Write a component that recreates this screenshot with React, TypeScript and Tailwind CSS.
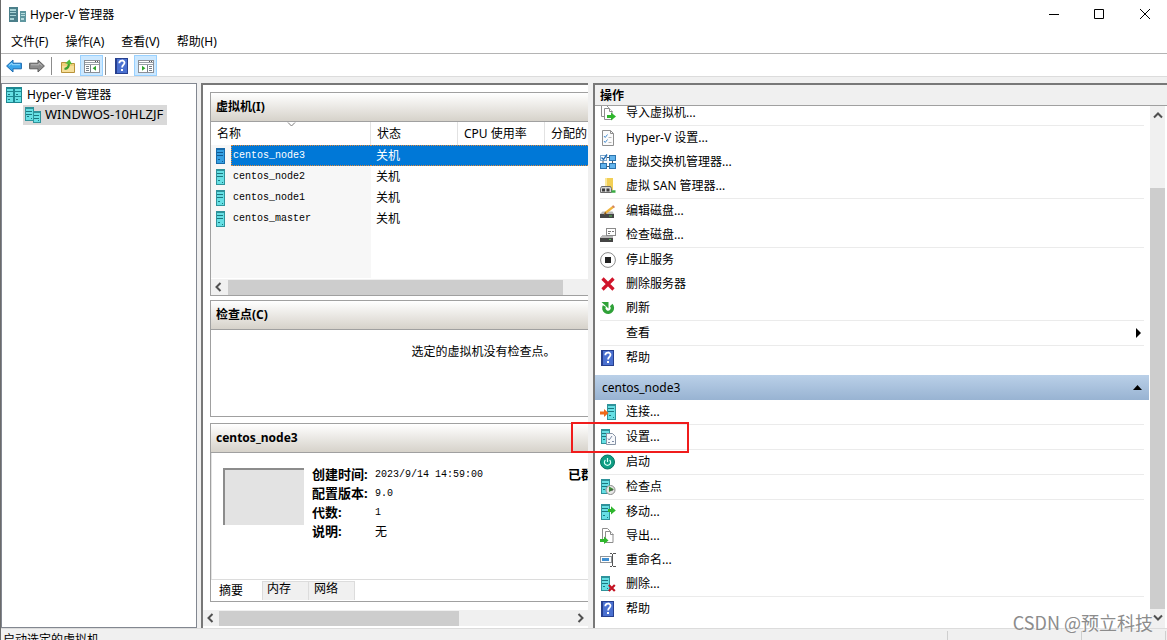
import type { ReactNode } from "react";
import clsx from "clsx";

type Action = {
  label: string;
  icon?: ReactNode;
  divider?: boolean;
  submenu?: boolean;
  highlighted?: boolean;
};

function Icon({ children, size = 16 }: { children: ReactNode; size?: number }) {
  return (
    <svg width={size} height={size} viewBox="0 0 16 16" fill="none" aria-hidden="true" className="shrink-0">
      {children}
    </svg>
  );
}

function Tower({ x = 0, y = 0, w = 10, h = 16 }: { x?: number; y?: number; w?: number; h?: number }) {
  return (
    <g shapeRendering="crispEdges">
      <rect x={x} y={y} width={w} height={h} fill="#2f939b" />
      <rect x={x + 1} y={y + 2} width={w - 2} height={h - 3} fill="#66dfe4" />
      <path
        d={`M${x + 1} ${y + 4.5}h${w - 3}M${x + 1} ${y + 7.5}h${w - 3}M${x + 2} ${y + h - 4.5}h2M${x + w - 3} ${y + h - 2.5}h1`}
        stroke="#1c7880"
      />
    </g>
  );
}

const HelpIcon = () => (
  <Icon>
    <rect x="1" width="13" height="16" fill="#27408f" />
    <rect x="3" y="1" width="10" height="14" fill="#4a70d0" />
    <path d="M5.300 5.200c0-3.600 5.200-3.400 5.200-.4 0 2-2.400 2.200-2.400 4.600" stroke="#fff" strokeWidth="1.800" />
    <rect x="7" y="11" width="2" height="2" fill="#fff" />
  </Icon>
);

const AppIcon = () => (
  <Icon size={18}>
    <g shapeRendering="crispEdges">
      <rect x="0" y="1" width="8" height="13" fill="#4b7f8a" />
      <path d="M1 3.500h5M1 5.500h5M1 8.500h5M1 11.500h3" stroke="#a9d3d6" />
      <rect x="10" y="4" width="5" height="10" fill="#5f97a0" />
      <path d="M11 6.500h3M11 8.500h3M11 11.500h2" stroke="#b6dcde" />
    </g>
  </Icon>
);

const RootIcon = () => (
  <Icon>
    <g shapeRendering="crispEdges">
      <rect width="16" height="16" fill="#1d8791" />
      <path d="M1 2h6v2H1zM9 2h6v2H9zM1 5h6v4H1zM9 5h6v4H9zM1 10h6v5H1zM9 10h6v5H9z" fill="#66dfe4" />
      <path d="M2 7.500h2M10 7.500h2M2 12.500h2M10 12.500h2" stroke="#1c7880" />
    </g>
  </Icon>
);

const HostIcon = () => (
  <Icon>
    <Tower x={0} y={0} w={9} h={14} />
    <Tower x={8} y={4} w={8} h={12} />
  </Icon>
);

const BackIcon = () => (
  <Icon>
    <path d="M.6 8 7 2v3.200h8.400v5.600H7V14z" fill="#3aa5ea" stroke="#1969b0" strokeLinejoin="round" />
    <path d="M3 7.500 6 5v1.700h8" stroke="#9bdcff" />
  </Icon>
);

const ForwardIcon = () => (
  <Icon>
    <path d="M15.400 8 9 2v3.200H.6v5.600H9V14z" fill="#8c8c8c" stroke="#5c5c5c" strokeLinejoin="round" />
    <path d="M2 6.800h8V5l2.800 2.500" stroke="#b9b9b9" />
  </Icon>
);

const FolderUpIcon = () => (
  <Icon>
    <path d="M1.500 4.500h5l1 1h7v9h-13z" fill="#efd07a" stroke="#b8923a" />
    <path d="M2 8h12v6H2z" fill="#f6df9a" />
    <path d="M4.500 11C8 10.500 9 8 8.800 5.500" stroke="#3da12f" strokeWidth="2.200" />
    <path d="M5.200 5.600 9.400 1.400l2.600 4.800z" fill="#4fbd3c" />
  </Icon>
);

function PaneIcon({ flip = false }: { flip?: boolean }) {
  return (
    <Icon>
      <g shapeRendering="crispEdges">
        <rect x=".5" y="2.500" width="15" height="12" fill="#fff" stroke="#8b8f96" />
        <path d="M1 4.500h14M1 6.500h14" stroke="#9aa0a8" />
        <path d="M11 3.500h1M13 3.500h1" stroke="#555" />
        {flip ? (
          <path d="M9.500 7v7M11 8.500h3M11 10.500h3M11 12.500h3" stroke="#777f88" />
        ) : (
          <path d="M6.500 7v7M2 8.500h3M2 10.500h3M2 12.500h3" stroke="#777f88" />
        )}
      </g>
      {flip ? <path d="M4 7.800v5l3.400-2.500z" fill="#2fa32c" /> : <path d="M12 7.800v5l-3.400-2.500z" fill="#2fa32c" />}
    </Icon>
  );
}

const Pages = ({ x = 0 }: { x?: number }) => (
  <g fill="#fff" stroke="#8d8d8d">
    <path d={`M${x + 1.5} .5h5l2 2v9h-7z`} />
    <path d={`M${x + 4.5} 3.500h5l2.500 2.500v8.500h-7.500z`} />
    <path d={`M${x + 9.5} 3.500v3h3`} />
  </g>
);

const ImportIcon = () => (
  <Icon>
    <Pages />
    <path d="M7 10h4V7.500l5 4-5 4V13H7z" fill="#2fb62d" />
  </Icon>
);

const ExportIcon = () => (
  <Icon>
    <Pages x={1} />
    <path d="M0 11h4V8.500l4.500 4-4.500 3.500v-2H0z" fill="#2fb62d" />
  </Icon>
);

const ChecklistIcon = () => (
  <Icon>
    <path d="M2.500 .5h8l3 3v12h-11z" fill="#fbfbfb" stroke="#8f8f8f" />
    <path d="M10.500 .5v3h3" stroke="#8f8f8f" />
    <path d="m4 6 1.200 1.500L7.500 4.500M4 11l1.200 1.500 2.300-3" stroke="#4a8fd0" />
    <path d="M8.500 7.500h3M8.500 12.500h3" stroke="#b5b5b5" />
  </Icon>
);

const SwitchIcon = () => (
  <Icon>
    <path d="M3 6v5M12.500 6v5M6 3.500h3M6 12.500h3" stroke="#4b5660" />
    <rect x="9.500" y="1.500" width="6" height="5" fill="#63b4ec" stroke="#2c74ad" />
    <rect x=".5" y="9.500" width="6" height="5" fill="#63b4ec" stroke="#2c74ad" />
    <rect x="9.500" y="9.500" width="6" height="5" fill="#63b4ec" stroke="#2c74ad" />
    <rect x=".5" y="1.500" width="6" height="5" fill="#fff" stroke="#7fa9cc" />
    <path d="m1.500 3.500 2 2L7 .5" stroke="#2770b5" strokeWidth="1.400" />
  </Icon>
);

const SanIcon = () => (
  <Icon>
    <path d="M5 0h8v12H5z" fill="#f2cf55" />
    <path d="M5 0h2v12H5z" fill="#fae79a" />
    <path d="M1.500 8.500h9l1 2v4H.5v-4z" fill="#d5d5d5" stroke="#6a6a6a" />
    <path d="M2 10.500h3v3H2zM6.500 10.500h3v3h-3z" fill="#3c3c3c" />
    <path d="M11.500 13.500h4" stroke="#39ab42" strokeWidth="2.500" />
  </Icon>
);

const EditDiskIcon = () => (
  <Icon>
    <path d="M2.500 8.500h10l1.500 2.500H0z" fill="#b9b9b9" />
    <path d="M0 11h14v4H0z" fill="#454545" />
    <path d="M9 13h3" stroke="#58c25a" />
    <path d="m4 11.500 1-2.800 8-6.200 1.600 1.700-8 6.300z" fill="#f0b43c" />
    <path d="m12 3.200 1.300-1 1.700 1.800-1.300 1z" fill="#cf7f6b" />
    <path d="m4 11.500 1-2.800 1.600 1.800z" fill="#7a4a1c" />
  </Icon>
);

const InspectDiskIcon = () => (
  <Icon>
    <g shapeRendering="crispEdges">
      <rect x="6.500" y="1.500" width="9" height="7" fill="#fff" stroke="#8a8a8a" />
      <path d="M8 4.500h3M12 4.500h2M8 6.500h2" stroke="#777" />
      <path d="M2 8h4v1h7v2H0z" fill="#b9b9b9" />
      <path d="M0 11h13v4H0z" fill="#454545" />
      <path d="M9 12.500h2" stroke="#58c25a" />
    </g>
  </Icon>
);

const StopIcon = () => (
  <Icon>
    <circle cx="8" cy="8" r="7.400" fill="#fff" stroke="#8b8b8b" />
    <path d="M5 5h6v6H5z" fill="#222" />
  </Icon>
);

const RemoveIcon = () => (
  <Icon>
    <path d="m2.500 2.500 11 11M13.500 2.500l-11 11" stroke="#d0142a" strokeWidth="3.200" />
  </Icon>
);

const RefreshIcon = () => (
  <Icon>
    <path d="M4.300 6A4.300 4.300 0 1 0 11.200 5" stroke="#2fa138" strokeWidth="3.400" />
    <path d="M1.500 2H8.500V8.500z" fill="#2fa138" />
  </Icon>
);

const ConnectIcon = () => (
  <Icon>
    <Tower x={7} w={9} />
    <path d="M0 7.500h4V5l4.500 4L4 13v-2.500H0z" fill="#ef6a1a" />
  </Icon>
);

const VmSettingsIcon = () => (
  <Icon>
    <Tower x={1} w={9} h={15} />
    <path d="M6.500 4.500h6l3 3v8h-9z" fill="#f7f9fc" stroke="#8793a5" />
    <path d="m8 9.500 1.200 1.500L12 7M8 13.500h2M12 12.500h2" stroke="#7d8ba6" />
  </Icon>
);

const PowerIcon = () => (
  <Icon>
    <circle cx="7.500" cy="8" r="7" fill="#0e9d83" stroke="#0a7462" />
    <path d="M5.400 6a3.100 3.100 0 1 0 4.200 0M7.500 4v4" stroke="#d9fff6" strokeWidth="1.200" />
  </Icon>
);

const CheckpointIcon = () => (
  <Icon>
    <Tower x={1} w={9} h={15} />
    <circle cx="10.500" cy="11" r="4.500" fill="#e6e6e6" stroke="#8a8a8a" />
    <path d="M9 7.500V13l5-2.800z" fill="#3f8f3a" />
    <path d="M10.500 11h2.500" stroke="#444" />
  </Icon>
);

const MoveIcon = () => (
  <Icon>
    <Tower x={1} w={9} />
    <path d="M8 5h3V2.200l4.800 4.300-4.800 4.100V8H8z" fill="#2fb62d" />
  </Icon>
);

const RenameIcon = () => (
  <Icon>
    <g shapeRendering="crispEdges">
      <rect x=".5" y="4.500" width="11" height="6" fill="#fff" stroke="#8e9499" />
      <rect x="2" y="6" width="7" height="3" fill="#3f8fd2" />
      <path d="M12.500 2v12M10 1.500h2M13 1.500h3M10 14.500h2M13 14.500h3" stroke="#555" />
    </g>
  </Icon>
);

const DeleteVmIcon = () => (
  <Icon>
    <Tower x={1} w={9} h={15} />
    <path d="m8.800 9 6 6M14.800 9l-6 6" stroke="#c41222" strokeWidth="2.200" />
  </Icon>
);

function VmIcon({ selected }: { selected?: boolean }) {
  return (
    <svg width="9" height="16" viewBox="0 0 9 16" shapeRendering="crispEdges" aria-hidden="true">
      <rect width="9" height="16" fill={selected ? "#1769a8" : "#2f939b"} />
      <rect x="1" y="2" width="7" height="13" fill={selected ? "#36a0e2" : "#66dfe4"} />
      <path d="M1 4.500h6M1 7.500h6M2 11.500h2M6 13.500h1" stroke={selected ? "#125a92" : "#1c7880"} />
    </svg>
  );
}

const hostActions: Action[] = [
  { label: "导入虚拟机...", icon: <ImportIcon />, divider: true },
  { label: "Hyper-V 设置...", icon: <ChecklistIcon /> },
  { label: "虚拟交换机管理器...", icon: <SwitchIcon /> },
  { label: "虚拟 SAN 管理器...", icon: <SanIcon />, divider: true },
  { label: "编辑磁盘...", icon: <EditDiskIcon /> },
  { label: "检查磁盘...", icon: <InspectDiskIcon />, divider: true },
  { label: "停止服务", icon: <StopIcon /> },
  { label: "删除服务器", icon: <RemoveIcon /> },
  { label: "刷新", icon: <RefreshIcon />, divider: true },
  { label: "查看", divider: true, submenu: true },
  { label: "帮助", icon: <HelpIcon /> },
];

const vmActions: Action[] = [
  { label: "连接...", icon: <ConnectIcon />, divider: true },
  { label: "设置...", icon: <VmSettingsIcon />, divider: true, highlighted: true },
  { label: "启动", icon: <PowerIcon />, divider: true },
  { label: "检查点", icon: <CheckpointIcon />, divider: true },
  { label: "移动...", icon: <MoveIcon /> },
  { label: "导出...", icon: <ExportIcon /> },
  { label: "重命名...", icon: <RenameIcon /> },
  { label: "删除...", icon: <DeleteVmIcon />, divider: true },
  { label: "帮助", icon: <HelpIcon /> },
];

const vms = ["centos_node3", "centos_node2", "centos_node1", "centos_master"];

const summary = [
  ["创建时间", "2023/9/14 14:59:00"],
  ["配置版本", "9.0"],
  ["代数", "1"],
  ["说明", "无"],
];

const arrows = {
  left: "M6.500 1 2.500 5l4 4",
  right: "M3.500 1l4 4-4 4",
  up: "M1 6.500 5 2.500l4 4",
  down: "M1 3.500 5 7.500l4-4",
};

function ScrollButton({ dir, label }: { dir: keyof typeof arrows; label: string }) {
  return (
    <button type="button" aria-label={label} className="flex size-4 shrink-0 items-center justify-center">
      <svg width="10" height="10" viewBox="0 0 10 10" fill="none">
        <path d={arrows[dir]} stroke="#505050" strokeWidth="2" />
      </svg>
    </button>
  );
}

function ActionList({ items }: { items: Action[] }) {
  return (
    <ul>
      {items.map((item, i) => (
        <li key={i} className="relative px-[5px]">
          <button
            type="button"
            className={clsx(
              "flex w-full items-center gap-[10px] text-left",
              item.divider ? "h-[25px] border-b border-[#ebebeb]" : "h-6",
            )}
          >
            <span className="w-4 shrink-0">{item.icon}</span>
            <span className="flex-1">{item.label}</span>
            {item.submenu ? (
              <svg width="5" height="10" viewBox="0 0 5 10" className="mr-[3px]" aria-hidden="true">
                <path d="M0 0v10l5-5z" fill="#000" />
              </svg>
            ) : null}
          </button>
          {item.highlighted ? (
            <span className="pointer-events-none absolute -top-[3px] -left-6 h-[31px] w-[118px] border-2 border-[#f01c1c]" />
          ) : null}
        </li>
      ))}
    </ul>
  );
}

function GroupHeader({ children }: { children: ReactNode }) {
  return (
    <h2 className="flex h-[29px] shrink-0 items-center border-b border-[#a0a0a0] bg-gradient-to-b from-white to-[#d6d2ca] px-[5px] font-bold">
      {children}
    </h2>
  );
}

function Toolbar() {
  return (
    <div className="flex h-[23px] shrink-0 items-center border-b border-[#dcdcdc] pt-px pl-[5px]">
      <button type="button" aria-label="后退">
        <BackIcon />
      </button>
      <button type="button" aria-label="前进" className="ml-[7px]">
        <ForwardIcon />
      </button>
      <span className="mx-[6px] h-[18px] w-px bg-[#8c8c8c]" />
      <button type="button" aria-label="向上" className="ml-[2px]">
        <FolderUpIcon />
      </button>
      <button
        type="button"
        aria-label="显示/隐藏控制台树"
        className="ml-1 flex h-[21px] w-[23px] items-center justify-center border border-[#99d1ff] bg-[#cce8ff]"
      >
        <PaneIcon />
      </button>
      <span className="mr-2 ml-[2px] h-[18px] w-px bg-[#8c8c8c]" />
      <button type="button" aria-label="帮助">
        <HelpIcon />
      </button>
      <button
        type="button"
        aria-label="显示/隐藏操作窗格"
        className="ml-1 flex h-[21px] w-[23px] items-center justify-center border border-[#99d1ff] bg-[#cce8ff]"
      >
        <PaneIcon flip />
      </button>
    </div>
  );
}

function VmTable() {
  return (
    <section className="flex h-[204px] flex-col border border-[#a0a0a0]">
      <GroupHeader>虚拟机(I)</GroupHeader>
      <table className="w-full table-fixed border-separate border-spacing-0 text-left">
        <colgroup>
          <col className="w-5" />
          <col className="w-[140px]" />
          <col className="w-[87px]" />
          <col className="w-[87px]" />
          <col />
        </colgroup>
        <thead>
          <tr className="h-[23px]">
            <th colSpan={2} className="relative border-r border-[#e2e2e2] p-0 pl-[6px] font-normal">
              名称
              <svg width="9" height="5" viewBox="0 0 9 5" fill="none" className="absolute top-0 left-[76px]" aria-hidden="true">
                <path d="M1 .5 4.500 4 8 .5" stroke="#7a7a7a" />
              </svg>
            </th>
            <th className="border-r border-[#e2e2e2] p-0 pl-[6px] font-normal">状态</th>
            <th className="border-r border-[#e2e2e2] p-0 pl-[6px] font-normal">CPU 使用率</th>
            <th className="p-0 pl-[6px] font-normal">分配的</th>
          </tr>
        </thead>
        <tbody>
          {vms.map((name, i) => (
            <tr key={name} className="h-[21px]">
              <td className="bg-[#f7f7f7] p-0 pl-[5px]">
                <VmIcon selected={i === 0} />
              </td>
              <td
                className={clsx(
                  "p-0 font-['Liberation_Mono','Noto_Sans_CJK_SC',monospace] text-[10px]",
                  i === 0
                    ? "border border-r-0 border-dotted border-[#e08a3c] bg-[#0078d7] pl-px text-white"
                    : "bg-[#f7f7f7] pl-[2px]",
                )}
              >
                {name}
              </td>
              <td
                colSpan={3}
                className={clsx(
                  "p-0 pl-[5px]",
                  i === 0 && "border-y border-dotted border-[#e08a3c] bg-[#0078d7] text-white",
                )}
              >
                关机
              </td>
            </tr>
          ))}
        </tbody>
      </table>
      <div className="w-[160px] flex-1 bg-[#f7f7f7]" />
      <div className="mt-px flex h-4 items-center bg-[#f0f0f0]">
        <ScrollButton dir="left" label="向左滚动" />
        <div className="ml-px h-[15px] w-[335px] bg-[#cdcdcd]" />
      </div>
    </section>
  );
}

function Summary() {
  return (
    <section className="flex min-h-[179px] flex-1 flex-col border border-[#a0a0a0]">
      <GroupHeader>centos_node3</GroupHeader>
      <div className="flex flex-1 border-l border-[#e3e3e3] pt-3 pl-[11px]">
        <div className="mt-[3px] h-[57px] w-[81px] border-t-2 border-l-2 border-[#8c8c8c] bg-[#e3e3e3]" />
        <dl className="ml-2 grid w-[256px] auto-rows-[19px] grid-cols-[63px_1fr] items-center">
          {summary.map(([label, value]) => (
            <div key={label} className="contents">
              <dt className="text-[13px] font-bold">{label}:</dt>
              <dd
                className={clsx(
                  value === "无"
                    ? "text-xs"
                    : "font-['Liberation_Mono','Noto_Sans_CJK_SC',monospace] text-[10px]",
                )}
              >
                {value}
              </dd>
            </div>
          ))}
        </dl>
        <span className="h-[19px] text-[13px] leading-[19px] font-bold">已群</span>
      </div>
      <div role="tablist" className="flex h-[22px] items-start border-t border-[#dcdcdc]">
        <button type="button" role="tab" aria-selected="true" className="h-[21px] w-[51px] pl-2 text-left">
          摘要
        </button>
        <button
          type="button"
          role="tab"
          aria-selected="false"
          className="mt-px flex h-[19px] w-[46px] border-t border-l border-[#dcdcdc] bg-[#f0f0f0] pl-1 leading-[14px]"
        >
          内存
        </button>
        <button
          type="button"
          role="tab"
          aria-selected="false"
          className="mt-px flex h-[19px] w-[47px] border-x border-t border-[#dcdcdc] bg-[#f0f0f0] pl-[5px] leading-[14px]"
        >
          网络
        </button>
      </div>
    </section>
  );
}

export default function App() {
  return (
    <div
      lang="zh-CN"
      className="relative flex h-screen flex-col overflow-hidden border-l border-[#6b6b6b] bg-[#f0f0f0] font-['Noto_Sans','Noto_Sans_CJK_SC',sans-serif] text-xs text-black"
    >
      <header className="shrink-0 bg-white">
        <div className="flex h-[30px] items-center pl-2">
          <AppIcon />
          <h1 className="ml-[3px] flex-1">Hyper-V 管理器</h1>
          <button type="button" aria-label="最小化" className="flex h-7 w-[42px] items-center justify-center self-start">
            <svg width="10" height="10" viewBox="0 0 10 10" stroke="#000">
              <path d="M0 5.500h10" />
            </svg>
          </button>
          <button type="button" aria-label="最大化" className="flex h-7 w-12 items-center justify-center self-start">
            <svg width="10" height="10" viewBox="0 0 10 10" fill="none" stroke="#000">
              <path d="M.5 .5h9v9h-9z" />
            </svg>
          </button>
          <button type="button" aria-label="关闭" className="flex h-7 w-11 items-center justify-center self-start">
            <svg width="10" height="10" viewBox="0 0 10 10" stroke="#000">
              <path d="m0 0 10 10M10 0 0 10" />
            </svg>
          </button>
        </div>
        <nav className="flex h-6 items-center gap-[17px] border-b border-[#b4b4b4] pl-[10px]">
          <button type="button">文件(F)</button>
          <button type="button">操作(A)</button>
          <button type="button">查看(V)</button>
          <button type="button">帮助(H)</button>
        </nav>
        <Toolbar />
      </header>

      <main className="mt-[6px] flex min-h-0 flex-1">
        <nav className="w-[196px] shrink-0 border border-[#828790] bg-white pt-px pl-1">
          <ul>
            <li>
              <div className="flex h-5 items-center gap-[5px]">
                <RootIcon />
                Hyper-V 管理器
              </div>
              <ul className="pl-[17px]">
                <li className="flex">
                  <button type="button" className="flex h-5 items-center gap-1 bg-[#d9d9d9] pr-1 pl-[2px] text-[13px]">
                    <HostIcon />
                    WINDWOS-10HLZJF
                  </button>
                </li>
              </ul>
            </li>
          </ul>
        </nav>

        <div className="ml-1 flex min-w-0 flex-1 flex-col overflow-hidden border-t-2 border-l-2 border-[#787878] bg-white">
          <div className="flex min-h-0 w-[554px] flex-1 flex-col pt-[7px] pl-[7px]">
            <VmTable />
            <section className="mt-1 h-[117px] border border-[#a0a0a0]">
              <GroupHeader>检查点(C)</GroupHeader>
              <p className="pt-[14px] text-center leading-4">选定的虚拟机没有检查点。</p>
            </section>
            <div className="h-[6px] shrink-0" />
            <Summary />
          </div>
          <div className="mt-2 mb-[2px] flex h-4 shrink-0 items-center bg-[#f0f0f0]">
            <ScrollButton dir="left" label="向左滚动" />
            <div className="h-[15px] w-[240px] bg-[#cdcdcd]" />
            <div className="flex-1" />
            <ScrollButton dir="right" label="向右滚动" />
          </div>
        </div>

        <aside className="ml-[5px] flex w-[574px] shrink-0 flex-col border-t-2 border-l-2 border-[#787878] bg-white">
          <h2 className="flex h-[21px] shrink-0 items-center border-b border-[#a0a0a0] bg-[#f0f0f0] pt-[2px] pl-[5px] font-bold">
            操作
          </h2>
          <div className="flex min-h-0 flex-1">
            <div className="min-w-0 flex-1 overflow-y-clip">
              <div className="-mt-[5px]">
                <ActionList items={hostActions} />
              </div>
              <button
                type="button"
                className="mt-[5px] flex h-[25px] w-full items-center bg-gradient-to-b from-[#bad0e8] to-[#98b3d2] px-[7px] text-left"
              >
                <span className="flex-1">centos_node3</span>
                <svg width="9" height="5" viewBox="0 0 9 5" aria-hidden="true">
                  <path d="M0 5h9L4.500 0z" fill="#000" />
                </svg>
              </button>
              <ActionList items={vmActions} />
            </div>
            <div className="mr-[2px] ml-px flex w-[15px] shrink-0 flex-col items-center bg-[#f0f0f0]">
              <div className="flex h-[82px] items-start pt-[2px]">
                <ScrollButton dir="up" label="向上滚动" />
              </div>
              <div className="w-full flex-1 bg-[#cdcdcd]" />
              <ScrollButton dir="down" label="向下滚动" />
              <div className="h-[3px]" />
            </div>
          </div>
        </aside>
      </main>

      <footer className="flex h-3 shrink-0 overflow-hidden border-t border-[#dcdcdc]">
        <p className="flex-1 pt-1 pl-[2px] leading-[14px]">启动选定的虚拟机</p>
        <span className="mt-[2px] w-[134px] border-l border-[#cfcfcf]" />
        <span className="mt-[2px] mr-px w-[85px] border-x border-[#cfcfcf]" />
      </footer>

      <span className="pointer-events-none absolute right-[14px] bottom-1 font-['Noto_Sans_CJK_SC',sans-serif] text-lg leading-7 text-[#8c8c8c] [text-shadow:-1px_-1px_0_#ffffff]">
        CSDN @预立科技
      </span>
    </div>
  );
}
